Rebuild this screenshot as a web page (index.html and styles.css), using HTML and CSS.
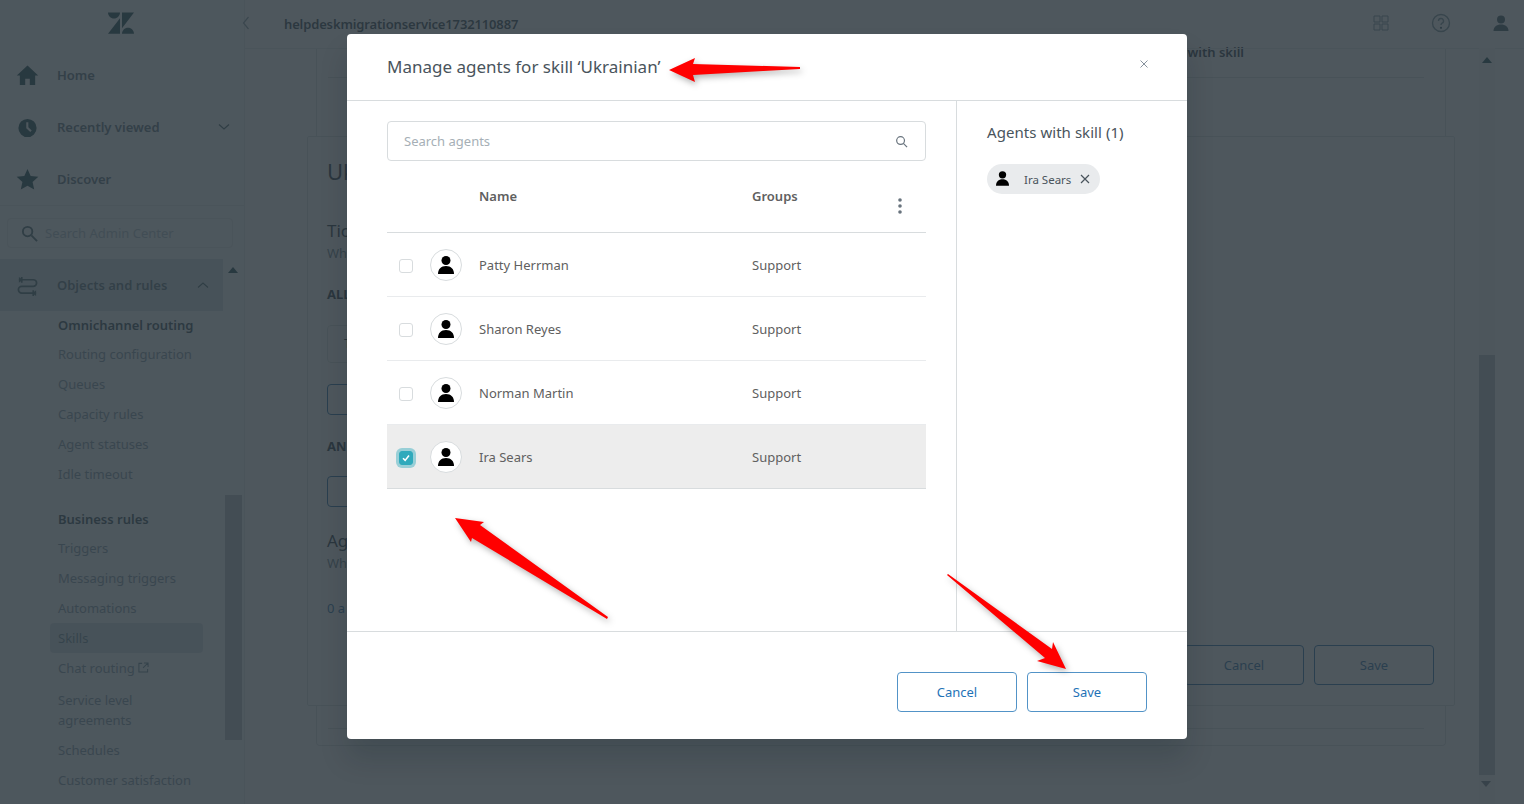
FILE: index.html
```html
<!DOCTYPE html>
<html lang="en">
<head>
<meta charset="utf-8">
<title>Manage agents for skill</title>
<link rel="stylesheet" href="styles.css">
</head>
<body>
<div class="app">
  <aside class="sidebar">
    <div class="logo-row">
      <svg class="logo" viewBox="0 0 26 26"><path d="M12 8.2v15.6H0L12 8.2zm0-5.6c0 3.3-2.7 6-6 6s-6-2.7-6-6h12zm2 21.2c0-3.3 2.7-6 6-6s6 2.7 6 6H14zm0-5.6V2.6h12L14 18.2z"/></svg>
    </div>
    <div class="nav-row">
      <svg class="nav-icon" viewBox="0 0 24 24"><path d="M12 1.5 0.8 12h3.2v10h5.6v-6.5h4.8V22H20V12h3.2z"/></svg>
      <span class="nav-label">Home</span>
    </div>
    <div class="nav-row">
      <svg class="nav-icon" viewBox="0 0 24 24"><path fill-rule="evenodd" d="M12 3a9.500 9.500 0 1 0 0 19 9.500 9.500 0 0 0 0-19zm-1.300 3.500h2.200v5.300l3.500 3.300-1.500 1.600-4.200-4z"/></svg>
      <span class="nav-label">Recently viewed</span>
      <svg class="chev" viewBox="0 0 12 8"><path d="M1 1.500 6 6l5-4.500"/></svg>
    </div>
    <div class="nav-row nav-row-last">
      <svg class="nav-icon" viewBox="0 0 24 24"><path d="m12 1 3.300 7.400 8 .8-6 5.400 1.700 7.900-7-4-7 4 1.700-7.900-6-5.400 8-.8z"/></svg>
      <span class="nav-label">Discover</span>
    </div>
    <div class="side-search">
      <svg class="side-search-icon" viewBox="0 0 18 18"><circle cx="7" cy="7" r="5"/><path d="m11 11 6 6"/></svg>
      <span>Search Admin Center</span>
    </div>
    <div class="nav-row nav-active">
      <svg class="nav-icon nav-icon-line" viewBox="0 0 24 24"><path d="M6 6h12a3.500 3.500 0 0 1 0 7H6a3.500 3.500 0 0 0 0 7h14M6 3v6M18 17v6M3 6h3M21 20h-3"/><path class="fillhead" d="M3 3v6l4-3zM21 17v6l-4-3z"/></svg>
      <span class="nav-label">Objects and rules</span>
      <svg class="chev chev-up" viewBox="0 0 12 8"><path d="M1 6.500 6 2l5 4.500"/></svg>
    </div>
    <div class="sub-group">
      <div class="sub-head">Omnichannel routing</div>
      <div class="sub-item">Routing configuration</div>
      <div class="sub-item">Queues</div>
      <div class="sub-item">Capacity rules</div>
      <div class="sub-item">Agent statuses</div>
      <div class="sub-item">Idle timeout</div>
    </div>
    <div class="sub-group sub-group-next">
      <div class="sub-head">Business rules</div>
      <div class="sub-item">Triggers</div>
      <div class="sub-item">Messaging triggers</div>
      <div class="sub-item">Automations</div>
      <div class="sub-item sub-current">Skills</div>
      <div class="sub-item sub-link">Chat routing
        <svg class="ext" viewBox="0 0 12 12"><path d="M4.500 1.500h-3.500v9.500h9.500V7.500M6.500 1h4.500v4.500M11 1 5.500 6.500"/></svg>
      </div>
      <div class="sub-item">Service level<br>agreements</div>
      <div class="sub-item">Schedules</div>
      <div class="sub-item">Customer satisfaction</div>
    </div>
    <span class="side-up"></span>
    <span class="side-thumb"></span>
  </aside>

  <main class="main">
    <header class="topbar">
      <span class="collapse"><svg viewBox="0 0 8 14"><path d="M6.500 1 1.500 7l5 6"/></svg></span>
      <span class="account">helpdeskmigrationservice1732110887</span>
      <span class="top-icons">
        <svg class="top-icon" viewBox="0 0 16 16"><path class="line" d="M1 1h6v6H1zM9 1h6v6H9zM1 9h6v6H1zM9 9h6v6H9z"/></svg>
        <svg class="top-icon top-help" viewBox="0 0 20 20"><circle class="line" cx="10" cy="10" r="8.500"/><path class="line" d="M7.500 8a2.500 2.500 0 1 1 3.600 2.200c-.8.400-1.100.9-1.100 1.800"/><circle cx="10" cy="14.800" r="1.100"/></svg>
        <svg class="top-icon top-user" viewBox="0 0 16 16"><circle cx="8" cy="4.500" r="4"/><path d="M0.500 16c0-4 3-6.500 7.500-6.500s7.500 2.500 7.500 6.500z"/></svg>
      </span>
    </header>
    <div class="cards">
      <section class="card-top">
        <div class="card-top-title">with skill</div>
        <div class="card-rule"></div>
      </section>
      <section class="card-main">
        <h2 class="skill-name">Uk</h2>
        <h3 class="sec-title">Tic</h3>
        <p class="sec-help">Wh</p>
        <div class="cond-label">ALL</div>
        <div class="cond-field">T</div>
        <div class="cond-button"></div>
        <div class="cond-label cond-any">AN</div>
        <div class="cond-button cond-button-any"></div>
        <h3 class="sec-title sec-agents">Ag</h3>
        <p class="sec-help">Wh</p>
        <p class="sec-count">0 a</p>
        <div class="back-actions">
          <span class="back-btn">Cancel</span>
          <span class="back-btn">Save</span>
        </div>
      </section>
      <section class="card-bottom"><div class="card-rule"></div></section>
    </div>
    <span class="main-scroll"><i class="main-up"></i><i class="main-thumb"></i><i class="main-down"></i></span>
  </main>
</div>

<div class="backdrop"></div>

<div class="modal">
  <header class="modal-head">
    <h1 class="modal-title">Manage agents for skill ‘Ukrainian’</h1>
    <svg class="modal-close" viewBox="0 0 10 10"><path d="m1.500 1.500 7 7M8.500 1.500l-7 7"/></svg>
  </header>
  <div class="modal-body">
    <div class="col-agents">
      <div class="search">
        <span>Search agents</span>
        <svg class="search-icon" viewBox="0 0 14 14"><circle cx="6" cy="6" r="4.200"/><path d="m9 9 4 4"/></svg>
      </div>
      <div class="thead">
        <span class="c-name">Name</span>
        <span class="c-group">Groups</span>
        <svg class="kebab" viewBox="0 0 4 16"><circle cx="2" cy="2" r="1.800"/><circle cx="2" cy="8" r="1.800"/><circle cx="2" cy="14" r="1.800"/></svg>
      </div>
      <div class="row">
        <span class="check"></span>
        <span class="avatar"><svg class="person" viewBox="0 0 16 18"><circle cx="8" cy="4.500" r="4.500"/><path d="M0 18c0-5 3-8 8-8s8 3 8 8z"/></svg></span>
        <span class="c-name">Patty Herrman</span>
        <span class="c-group">Support</span>
      </div>
      <div class="row">
        <span class="check"></span>
        <span class="avatar"><svg class="person" viewBox="0 0 16 18"><circle cx="8" cy="4.500" r="4.500"/><path d="M0 18c0-5 3-8 8-8s8 3 8 8z"/></svg></span>
        <span class="c-name">Sharon Reyes</span>
        <span class="c-group">Support</span>
      </div>
      <div class="row">
        <span class="check"></span>
        <span class="avatar"><svg class="person" viewBox="0 0 16 18"><circle cx="8" cy="4.500" r="4.500"/><path d="M0 18c0-5 3-8 8-8s8 3 8 8z"/></svg></span>
        <span class="c-name">Norman Martin</span>
        <span class="c-group">Support</span>
      </div>
      <div class="row row-selected">
        <span class="check check-on"><svg viewBox="0 0 10 10"><path d="m2.500 5.200 1.800 1.800 3.200-4"/></svg></span>
        <span class="avatar"><svg class="person" viewBox="0 0 16 18"><circle cx="8" cy="4.500" r="4.500"/><path d="M0 18c0-5 3-8 8-8s8 3 8 8z"/></svg></span>
        <span class="c-name">Ira Sears</span>
        <span class="c-group">Support</span>
      </div>
    </div>
    <div class="col-skill">
      <h2 class="skill-title">Agents with skill (1)</h2>
      <div class="pill">
        <svg class="pill-person" viewBox="0 0 16 18"><circle cx="8" cy="4.500" r="4.500"/><path d="M0 18c0-5 3-8 8-8s8 3 8 8z"/></svg>
        <span class="pill-name">Ira Sears</span>
        <svg class="pill-x" viewBox="0 0 10 10"><path d="m1 1 8 8M9 1 1 9"/></svg>
      </div>
    </div>
  </div>
  <footer class="modal-foot">
    <span class="btn">Cancel</span>
    <span class="btn">Save</span>
  </footer>
</div>

<svg class="arrows" viewBox="0 0 1524 804">
  <polygon points="669,70 695,58 693,64 800,67 800,69 693,75 695,82"/>
  <polygon points="455,518 484,522 480,525 608,617 607,619 472,538 471,542"/>
  <polygon points="947,575 948,574 1052,649 1053,642 1066,669 1037,661 1045,658"/>
</svg>
</body>
</html>
```
FILE: styles.css
```css
* { box-sizing: border-box; }
html, body { margin: 0; height: 100%; }
body {
  width: 1524px;
  height: 804px;
  overflow: hidden;
  position: relative;
  font-family: "Noto Sans", "Open Sans", sans-serif;
  background: #fff;
  color: #2f3941;
}
h1, h2, h3, p { margin: 0; font-weight: 400; }

.app { display: flex; height: 804px; }

/* sidebar */
.sidebar {
  position: relative;
  width: 245px;
  height: 804px;
  flex: none;
  overflow: hidden;
  background: #f8fafb;
  border-right: 1px solid #e3e6e8;
}
.logo-row { height: 49px; display: flex; justify-content: center; padding: 10px 3px 0 0; }
.logo { width: 26px; height: 26px; fill: #03363d; }
.nav-row {
  display: flex;
  align-items: center;
  height: 52px;
  padding-left: 16px;
  color: #4c6573;
  font-size: 13px;
  font-weight: 600;
  position: relative;
}
.nav-row-last { border-bottom: 1px solid #e3e6e8; height: 53px; }
.nav-icon { width: 23px; height: 23px; fill: #03363d; flex: none; }
.nav-label { margin-left: 18px; }
.nav-icon-line { fill: none; stroke: #35575f; stroke-width: 1.800; }
.fillhead { fill: #35575f; stroke: none; }
.chev {
  position: absolute;
  left: 218px;
  top: 22px;
  width: 12px;
  height: 8px;
  fill: none;
  stroke: #35575f;
  stroke-width: 1.200;
}
.chev-up { left: 197px; }
.side-search {
  display: flex;
  align-items: center;
  gap: 7px;
  width: 226px;
  height: 30px;
  margin: 12px 0 11px 7px;
  padding-left: 13px;
  border: 1px solid #e0e6e9;
  border-radius: 4px;
  font-size: 13px;
  color: #a9bcc6;
}
.side-search-icon { width: 17px; height: 17px; fill: none; stroke: #35575f; stroke-width: 2; flex: none; }
.nav-active { width: 223px; background: #d2dfe4; }
.sub-group { margin-top: 4px; padding-left: 50px; font-size: 13px; }
.sub-group-next { margin-top: 20px; }
.sub-head { height: 20px; line-height: 20px; padding-left: 8px; margin-bottom: 4px; font-weight: 600; color: #1c3a48; }
.sub-item { padding: 5px 8px; line-height: 20px; color: #7690a0; width: 153px; }
.sub-current { background: #d2dfe4; border-radius: 4px; color: #5b7c8a; }
.sub-link { padding-bottom: 7px; white-space: nowrap; }
.ext { width: 11px; height: 11px; fill: none; stroke: #5b7c8a; stroke-width: 1.100; }
.side-up {
  position: absolute; left: 228px; top: 267px;
  border: 5px solid transparent; border-top: 0; border-bottom: 6px solid #03363d;
}
.side-thumb { position: absolute; left: 225px; top: 495px; width: 17px; height: 245px; background: #b4babf; }

/* main */
.main { position: relative; flex: 1; background: #fff; }
.topbar {
  display: flex;
  align-items: center;
  height: 49px;
  padding-bottom: 3px;
  position: relative;
  border-bottom: 1px solid #e3e6e8;
}
.collapse { width: 8px; margin-left: -3px; display: flex; }
.collapse svg { width: 8px; height: 14px; fill: none; stroke: #7c919b; stroke-width: 1.200; }
.account { margin-left: 34px; padding-top: 2px; font-size: 13px; font-weight: 600; letter-spacing: -.14px; color: #1d3340; }
.top-icons { margin-left: auto; display: flex; align-items: center; gap: 42px; padding-right: 15px; }
.top-icon { width: 16px; height: 16px; fill: #2a4a55; }
.line { fill: none; stroke: #6a8590; stroke-width: 1; }
.top-help { width: 20px; height: 20px; }
.top-help .line { stroke-width: 1.400; }
.cards { width: 1130px; margin: 0 0 0 71px; }
.card-top {
  height: 87px;
  border: solid #d8dcde;
  border-width: 0 1px;
  padding: 0 21px 0 11px;
}
.card-top-title { text-align: right; padding-right: 180px; font-size: 13px; font-weight: 600; line-height: 6px; height: 28px; color: #10242f; }
.card-rule { height: 1px; background: #d8dcde; }
.card-main {
  position: relative;
  height: 570px;
  margin: 0 -9px;
  padding: 19px 19px 0;
  border: 1px solid #d8dcde;
  border-radius: 2px;
  background: #fff;
}
.skill-name { font-size: 22px; line-height: 30px; color: #10242f; }
.sec-title { margin-top: 34px; font-size: 17px; line-height: 22px; color: #10242f; }
.sec-help { font-size: 13px; line-height: 23px; color: #5c7380; }
.cond-label { margin-top: 20px; font-size: 13px; font-weight: 700; line-height: 18px; color: #10242f; }
.cond-field { margin-top: 22px; height: 38px; width: 300px; padding: 8px 16px; border: 1px solid #d8dcde; border-radius: 4px; font-size: 13px; color: #10242f; }
.cond-button { margin-top: 21px; height: 31px; width: 200px; border: 1px solid #0f5e9e; border-radius: 4px; }
.cond-any { margin-top: 22px; }
.cond-button-any { margin-top: 21px; }
.sec-agents { margin-top: 23px; }
.sec-count { margin-top: 23px; font-size: 13px; line-height: 20px; color: #0f5e9e; }
.back-actions { position: absolute; right: 20px; top: 508px; display: flex; gap: 10px; }
.back-btn {
  display: flex; align-items: center; justify-content: center;
  width: 120px; height: 40px;
  border: 1px solid #0f5e9e; border-radius: 4px;
  font-size: 13px; color: #0f5e9e;
}
.card-bottom {
  height: 40px;
  padding: 22px 21px 0 11px;
  border: 1px solid #d8dcde;
  border-top: 0;
  border-radius: 0 0 4px 4px;
}
.main-scroll { position: absolute; left: 1234px; top: 48px; width: 16px; height: 756px; background: #f3f4f5; }
.main-scroll i { position: absolute; display: block; }
.main-thumb { left: 0; top: 307px; width: 16px; height: 420px; background: #b4babf; }
.main-up { left: 3px; top: 9px; border: 5px solid transparent; border-top: 0; border-bottom: 6px solid #03363d; }
.main-down { left: 2px; top: 733px; border: 5px solid transparent; border-bottom: 0; border-top: 6px solid #68737d; }

/* backdrop and modal */
.backdrop { position: absolute; inset: 0; background: rgba(47, 57, 65, .85); }
.modal {
  position: absolute;
  left: 347px;
  top: 34px;
  width: 840px;
  height: 705px;
  display: flex;
  flex-direction: column;
  background: #fff;
  border-radius: 4px;
  box-shadow: 0 20px 28px rgba(4, 20, 30, .15);
}
.modal-head {
  display: flex;
  align-items: center;
  justify-content: space-between;
  height: 67px;
  flex: none;
  padding: 0 38px 0 40px;
  border-bottom: 1px solid #d8dcde;
}
.modal-title { font-size: 17px; line-height: 24px; color: #49545c; }
.modal-close { width: 10px; height: 10px; margin-bottom: 6px; fill: none; stroke: #87929d; stroke-width: 1; }
.modal-body { display: flex; height: 531px; flex: none; border-bottom: 1px solid #d8dcde; }
.col-agents { width: 610px; flex: none; padding: 20px 30px 0 40px; border-right: 1px solid #d8dcde; }
.search {
  display: flex;
  align-items: center;
  justify-content: space-between;
  height: 40px;
  padding: 0 17px 0 16px;
  border: 1px solid #d8dcde;
  border-radius: 4px;
  font-size: 13px;
  color: #a6afb6;
}
.search-icon { width: 13px; height: 13px; fill: none; stroke: #68737d; stroke-width: 1.300; }
.thead {
  position: relative;
  display: flex;
  height: 72px;
  padding: 26px 0 0 92px;
  border-bottom: 1px solid #d8dcde;
  font-size: 13px;
  font-weight: 600;
  line-height: 18px;
  color: #606060;
}
.kebab { position: absolute; left: 511px; top: 37px; width: 4px; height: 16px; fill: #68737d; }
.c-name { width: 273px; flex: none; font-size: 13px; color: #606060; }
.c-group { font-size: 13px; color: #606060; }
.row {
  display: flex;
  align-items: center;
  height: 64px;
  padding-left: 12px;
  border-bottom: 1px solid #e9ebed;
}
.row-selected { background: #ededed; border-bottom-color: #d8dcde; }
.check {
  display: flex;
  width: 14px;
  height: 14px;
  flex: none;
  margin-top: 2px;
  border: 1px solid #d8dcde;
  border-radius: 3px;
  background: #fff;
}
.check-on { background: #30aabc; border-color: #30aabc; box-shadow: 0 0 0 3px rgba(48, 170, 188, .45); }
.check-on svg { width: 12px; height: 12px; fill: none; stroke: #fff; stroke-width: 1.300; }
.avatar {
  display: flex;
  align-items: center;
  justify-content: center;
  width: 32px;
  height: 32px;
  flex: none;
  margin: 0 17px;
  border: 1px solid #d8dcde;
  border-radius: 50%;
  background: #fff;
}
.person { width: 16px; height: 18px; fill: #000; }
.col-skill { flex: 1; padding: 20px 30px 0; }
.skill-title { font-size: 15px; line-height: 22px; color: #49545c; letter-spacing: .05px; }
.pill {
  display: inline-flex;
  align-items: center;
  height: 30px;
  margin-top: 21px;
  padding: 0 10px 0 9px;
  border-radius: 15px;
  background: #e9ebed;
}
.pill-person { width: 13px; height: 15px; fill: #000; margin-bottom: 1px; }
.pill-name { margin-left: 15px; font-size: 11.500px; color: #49545c; }
.pill-x { width: 10px; height: 10px; margin-left: 9px; fill: none; stroke: #49545c; stroke-width: 1.200; }
.modal-foot { display: flex; justify-content: flex-end; gap: 10px; padding: 40px 40px 0 0; }
.btn {
  display: flex;
  align-items: center;
  justify-content: center;
  width: 120px;
  height: 40px;
  border: 1px solid #5293c7;
  border-radius: 4px;
  font-size: 13px;
  color: #1f73b7;
}
.arrows {
  position: absolute;
  left: 0;
  top: 0;
  width: 1524px;
  height: 804px;
  fill: #ff0000;
  filter: drop-shadow(2px 3px 3px rgba(0, 0, 0, .3));
  pointer-events: none;
}
```
